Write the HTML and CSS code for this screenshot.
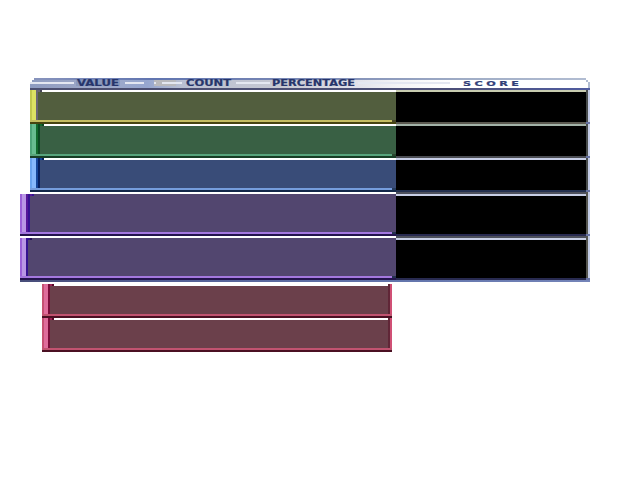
FILE: index.html
```
<!DOCTYPE html>
<html lang="en">
<head>
<meta charset="utf-8">
<title>Score table</title>
<link rel="stylesheet" href="styles.css">
</head>
<body>
<main class="board">
  <header class="head">
    <svg class="labels" width="560" height="10" viewBox="0 0 560 10">
      <g class="plates" shape-rendering="crispEdges">
        <rect class="plate-cool" x="46" y="2" width="44" height="6"/>
        <rect class="plate-warm" x="124" y="2" width="22" height="6"/>
      </g>
      <path class="streaks" shape-rendering="crispEdges" d="M0 5H44M95 5H114M124 5H126M132 5H152M206 5H240M328 5H420"/>
      <g class="words">
        <text x="47" y="8" textLength="42" lengthAdjust="spacingAndGlyphs">VALUE</text>
        <text x="156" y="8" textLength="45" lengthAdjust="spacingAndGlyphs">COUNT</text>
        <text x="242" y="8" textLength="83" lengthAdjust="spacingAndGlyphs">PERCENTAGE</text>
        <text class="score-word" transform="translate(433 8) scale(1.5 1)">SCORE</text>
      </g>
    </svg>
  </header>
  <section class="row yellow"><div class="cap"></div><div class="fill"></div><div class="score"></div><div class="edge"></div></section>
  <section class="row green"><div class="cap"></div><div class="fill"></div><div class="score"></div><div class="edge"></div></section>
  <section class="row blue"><div class="cap"></div><div class="fill"></div><div class="score"></div><div class="edge"></div></section>
  <section class="row purple"><div class="cap"></div><div class="fill"></div><div class="score"></div><div class="edge"></div></section>
  <section class="row purple second"><div class="cap"></div><div class="fill"></div><div class="score"></div><div class="edge"></div></section>
  <div class="base"></div>
  <section class="red"><div class="cap"></div><div class="fill"></div><div class="end"></div></section>
  <section class="red"><div class="cap"></div><div class="fill"></div><div class="end"></div></section>
</main>
</body>
</html>
```
FILE: styles.css
```
* { box-sizing: border-box; }
body { margin: 0; background: #fff; }
.board { width: 570px; margin-left: 20px; padding-top: 78px; }

.head {
  height: 12px;
  margin-left: 10px;
  background:
    linear-gradient(90deg, #4c4f70, #4c4f78 75%, #505ca0) 0 10px / 100% 2px no-repeat,
    linear-gradient(#b2bdd2, #b2bdd2) 558px 4px / 2px 6px no-repeat,
    linear-gradient(#b2bdd2, #b2bdd2) 556px 2px / 2px 2px no-repeat,
    linear-gradient(90deg, #8995bd 0, #6175b0 22%, #7b89b4 50%, #a0adc6 78%, #b2bdd2 100%) 0 0 / 100% 2px no-repeat,
    linear-gradient(90deg, #8e9bc0 0, #a0aac8 12%, #96a6cf 21%, #b9bfd2 27%, #c6c8d2 45%, #dedee8 57%, #f4f4f6 66%, #fff 75%);
  clip-path: polygon(0 4px, 2px 4px, 2px 2px, 4px 2px, 4px 0, 556px 0, 556px 2px, 558px 2px, 558px 4px, 560px 4px, 560px 100%, 0 100%);
}
.labels { display: block; }
.streaks { stroke: #e4e7f1; stroke-width: 2; }
.plate-cool { fill: #8b99bd; }
.plate-warm { fill: #b9b9bd; }
.words { font: bold 8px "DejaVu Sans", sans-serif; fill: #26356b; stroke: #26356b; stroke-width: .2px; }
.score-word { font-size: 7.5px; letter-spacing: 2.3px; fill: #34427c; }

.row {
  display: grid;
  grid-template-columns: var(--cap) 1fr 190px 4px;
  height: 34px;
  margin-left: 10px;
}
.row .cap {
  background: linear-gradient(90deg, var(--a) 2px, var(--b) 2px 6px, var(--c) 6px 8px, var(--d) 8px);
  border-bottom: 2px solid var(--dark);
  box-shadow: inset 0 -2px var(--line);
}
.row .fill {
  position: relative;
  background: var(--body);
  border-top: 2px solid #fff;
  border-bottom: 2px solid var(--dark);
  box-shadow: inset 0 -2px var(--line);
}
.row .fill::before {
  content: "";
  position: absolute;
  left: 0;
  top: -2px;
  width: 4px;
  height: 2px;
  background: linear-gradient(90deg, var(--c) 2px, var(--d) 2px);
}
.row .fill::after {
  content: "";
  position: absolute;
  right: 0;
  bottom: 0;
  width: 4px;
  height: 2px;
  background: var(--stub);
}
.row .score {
  background: #000;
  border-top: 2px solid var(--light);
  border-bottom: 2px solid var(--under);
}
.edge { background: linear-gradient(90deg, #484c4b 2px, #c3cce6 2px); border-bottom: 2px solid #6874a5; }

.yellow {
  --cap: 8px; --a: #c2c850; --b: #dce263; --c: #696675; --d: #484858;
  --body: #525e3e; --line: #c3bd62; --dark: #464410; --stub: #474527;
  --light: #c8ccb0; --under: #5b5950;
}
.green {
  --cap: 10px; --a: #4da579; --b: #67bd90; --c: #116b2d; --d: #0b4722;
  --body: #396044; --line: #58a47c; --dark: #173d25; --stub: #29472f;
  --light: #a3b3a8; --under: #4b4d53;
}
.blue {
  --cap: 10px; --a: #6aa4ef; --b: #87b9fc; --c: #17479a; --d: #07205f;
  --body: #394c78; --line: #759ddd; --dark: #132849; --stub: #263b5c;
  --light: #c6cde5; --under: #23304f;
}
.purple {
  --cap: 10px; --a: #9b61d9; --b: #b997e5; --c: #551798; --d: #351390;
  --body: #52466f; --line: #a478df; --dark: #24144d; --stub: #24304f;
  --light: #c6cde5; --under: #282a50;
  height: 44px;
  margin-left: 0;
}
.purple .cap { margin-top: 2px; }
.purple .fill::before { top: 0; }
.purple .score { border-top: 0; box-shadow: inset 0 2px #4d505c, inset 0 4px var(--light); }
.purple .edge { background: linear-gradient(90deg, #55554f 2px, #c3cce6 2px); }
.purple.second { --cap: 8px; --c: #351390; --d: #271057; }
.base { height: 2px; background: linear-gradient(90deg, #484d79, #535f95 25%, #6274ab 65%, #7484b8); }

.red {
  display: grid;
  grid-template-columns: 8px 1fr 4px;
  width: 350px;
  height: 34px;
  margin-left: 22px;
  --line: #c15370;
  --dark: #4b1023;
}
.base + .red { margin-top: 2px; }
.red > div { border-bottom: 2px solid var(--dark); box-shadow: inset 0 -2px var(--line); }
.red .cap { background: linear-gradient(90deg, #c65072 2px, #df6c9b 2px 6px, #790c39 6px); }
.red .fill { position: relative; background: #6b404b; border-top: 2px solid #fff; }
.red .fill::before {
  content: "";
  position: absolute;
  left: 0;
  top: -2px;
  width: 4px;
  height: 2px;
  background: linear-gradient(90deg, #9b2355 2px, #590829 2px);
}
.red .end { background: linear-gradient(90deg, #602637 2px, #d05075 2px); }
```
